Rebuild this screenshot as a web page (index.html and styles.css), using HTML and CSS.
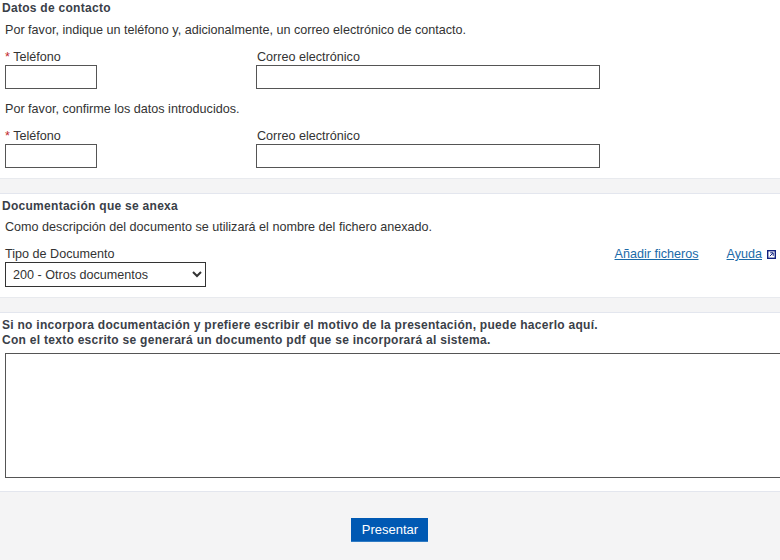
FILE: index.html
```html
<!DOCTYPE html>
<html lang="es">
<head>
<meta charset="utf-8">
<title>Datos de contacto</title>
<link rel="stylesheet" href="styles.css">
</head>
<body>
<section class="panel contact">
  <h2 class="title">Datos de contacto</h2>
  <p class="intro">Por favor, indique un teléfono y, adicionalmente, un correo electrónico de contacto.</p>
  <div class="pair">
    <label class="field phone"><span class="lab"><span class="req">*</span> Teléfono</span><input class="box small" type="text"></label>
    <label class="field"><span class="lab mail">Correo electrónico</span><input class="box wide" type="text"></label>
  </div>
  <p class="intro confirm">Por favor, confirme los datos introducidos.</p>
  <div class="pair">
    <label class="field phone"><span class="lab"><span class="req">*</span> Teléfono</span><input class="box small" type="text"></label>
    <label class="field"><span class="lab mail">Correo electrónico</span><input class="box wide" type="text"></label>
  </div>
</section>
<div class="sep"></div>
<section class="panel docs">
  <h2 class="title">Documentación que se anexa</h2>
  <p class="intro">Como descripción del documento se utilizará el nombre del fichero anexado.</p>
  <div class="docrow">
    <label class="field"><span class="lab">Tipo de Documento</span>
      <select class="sel"><option>200 - Otros documentos</option></select>
    </label>
    <div class="links">
      <a href="#">Añadir ficheros</a>
      <span class="help"><a href="#">Ayuda</a>
        <svg class="ext" width="9" height="9" viewBox="0 0 9 9" aria-hidden="true"><rect x="0.7" y="0.7" width="7.6" height="7.6" fill="#fff" stroke="#12217f" stroke-width="1.4"/><path d="M2.8 6.2 L5.8 3.2 M3.2 2.8 H6.2 V5.8" fill="none" stroke="#12217f" stroke-width="1"/></svg>
      </span>
    </div>
  </div>
</section>
<div class="sep"></div>
<section class="panel motive">
  <h2 class="title strong">Si no incorpora documentación y prefiere escribir el motivo de la presentación, puede hacerlo aquí.<br>Con el texto escrito se generará un documento pdf que se incorporará al sistema.</h2>
  <textarea class="area"></textarea>
</section>
<footer class="foot"><button class="btn" type="button">Presentar</button></footer>
</body>
</html>
```
FILE: styles.css
```css
html, body { margin: 0; padding: 0; }
body {
  width: 780px; height: 560px; overflow: hidden; background: #fff;
  font-family: "Liberation Sans", Arial, sans-serif; font-size: 12.6px; color: #333;
}
.panel { padding: 0 0 0 2px; }
.title { margin: 0; font-size: 12px; line-height: 14px; font-weight: bold; color: #3a4048; letter-spacing: .28px; }
.intro { margin: 0; padding-left: 3px; line-height: 14px; color: #333; }
.contact { height: 178px; padding-top: 1px; box-sizing: border-box; }
.contact .intro { margin-top: 8px; }
.contact .confirm { margin-top: 13px; }
.pair { display: flex; padding-left: 3px; }
.contact .pair { margin-top: 13px; }
.field { display: flex; flex-direction: column; }
.phone { width: 251px; }
.lab { line-height: 14px; height: 15px; color: #333; }
.mail { padding-left: 1px; }
.req { color: #c0282d; }
.box { box-sizing: border-box; height: 24px; margin: 0; padding: 0 4px; background: #fff; border: 1px solid #555; border-radius: 0; outline: 0; }
.small { width: 92px; }
.wide { width: 344px; }
.sep { height: 14px; background: #f4f4f5; border-top: 1px solid #e8eaee; border-bottom: 1px solid #e3e6ee; box-sizing: content-box; }
.docs { height: 103px; box-sizing: border-box; padding-top: 5px; }
.docs .intro { margin-top: 7px; }
.docrow { display: flex; justify-content: space-between; padding-left: 3px; margin-top: 13px; padding-right: 4px; }
.sel { box-sizing: border-box; width: 201px; height: 25px; margin: 0; padding: 0 3px; font: 12.6px "Liberation Sans", Arial, sans-serif; color: #333; background: #fff; border: 1px solid #333; border-radius: 0; }
.links { display: flex; gap: 28px; line-height: 14px; }
.links a { color: #1a6aa8; }
.help { display: flex; align-items: center; gap: 5px; height: 14px; }
.ext { display: block; }
.motive { height: 178px; box-sizing: border-box; padding-top: 5px; padding-left: 2px; }
.strong { line-height: 15px; }
.area { display: block; box-sizing: border-box; width: 790px; height: 125px; margin: 5px 0 0 3px; padding: 2px; border: 1px solid #555; border-radius: 0; background: #fff; resize: none; outline: 0; }
.foot { height: 69px; box-sizing: border-box; padding: 26px 1px 0 0; background: #f4f4f5; border-top: 1px solid #e3e6ee; text-align: center; }
.btn { box-sizing: border-box; width: 77px; height: 24px; margin: 0; padding: 0 0 0 1px; background: #0059b3; color: #fff; border: 0; border-bottom: 1px solid #2f7bc4; font: 13px "Liberation Sans", Arial, sans-serif; }
```
